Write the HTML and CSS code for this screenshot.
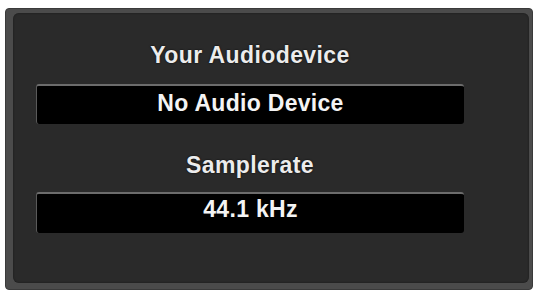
FILE: index.html
```html
<!DOCTYPE html>
<html>
<head>
<meta charset="utf-8">
<link rel="stylesheet" href="styles.css">
</head>
<body>
<div class="frame">
  <div class="panel">
    <div class="column">
      <div class="label label-first">Your Audiodevice</div>
      <div class="field field-device">No Audio Device</div>
      <div class="label label-second">Samplerate</div>
      <div class="field field-rate">44.1 kHz</div>
    </div>
  </div>
</div>
</body>
</html>
```
FILE: styles.css
```css
html, body {
  margin: 0;
  padding: 0;
  background: #ffffff;
}
body {
  width: 537px;
  height: 295px;
  overflow: hidden;
  font-family: "Liberation Sans", Arial, sans-serif;
}
.frame {
  box-sizing: border-box;
  margin: 8px 0 0 5px;
  width: 528px;
  height: 282px;
  background: #4b4b4b;
  border: 1px solid #3a3a3a;
  border-radius: 4px;
  padding: 4px 3px 6px 7px;
  display: flex;
}
.panel {
  flex: 1;
  background: #2a2a2a;
  border-radius: 6px;
  box-shadow: inset 0 0 2px rgba(0,0,0,0.5);
  padding: 29px 0 0 23px;
}
.column {
  width: 428px;
  display: flex;
  flex-direction: column;
}
.label {
  font-size: 23px;
  font-weight: bold;
  line-height: 26px;
  letter-spacing: 0.4px;
  color: #ececec;
  text-align: center;
  text-shadow: 0 0 2px #000;
}
.label-first {
  margin-bottom: 16px;
}
.label-second {
  margin-top: 28px;
  margin-bottom: 14px;
}
.field {
  box-sizing: border-box;
  background: #000000;
  border-top: 2px solid #6c6c6c;
  border-left: 1px solid #5a5a5a;
  border-radius: 3px;
  color: #f4f4f4;
  font-size: 23px;
  font-weight: bold;
  letter-spacing: 0.3px;
  text-align: center;
}
.field-device {
  height: 40px;
  line-height: 34px;
  padding-bottom: 4px;
}
.field-rate {
  height: 41px;
  line-height: 30px;
  padding-bottom: 9px;
}
```
